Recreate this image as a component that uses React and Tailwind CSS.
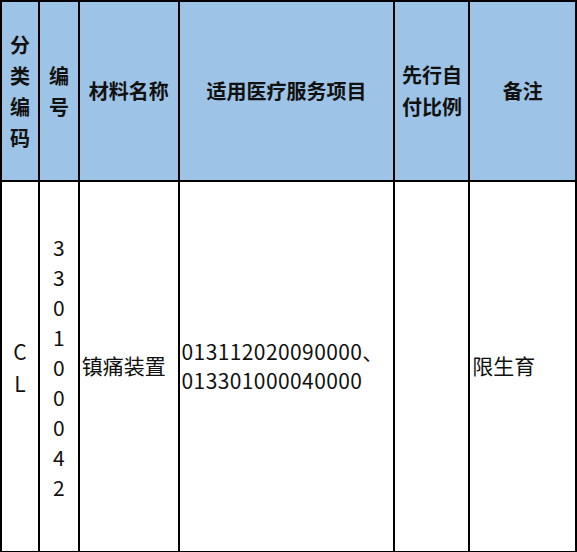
import React from "react";

const font = { fontFamily: '"Microsoft YaHei", "Noto Sans CJK SC", "Noto Sans", sans-serif' };

const Stack = ({ text, className = "" }) => (
  <div className={`flex flex-col items-center ${className}`}>
    {text.split("").map((ch, i) => (
      <span key={i}>{ch}</span>
    ))}
  </div>
);

const App = () => {
  return (
    <div className="w-[577px] h-[552px] bg-white" style={font}>
      <table className="table-fixed border-collapse text-[#111]">
        <colgroup>
          <col className="w-[38px]" />
          <col className="w-[40px]" />
          <col className="w-[100px]" />
          <col className="w-[216px]" />
          <col className="w-[75px]" />
          <col className="w-[107px]" />
        </colgroup>
        <thead>
          <tr className="h-[180px] bg-[#9dc3e6] text-[20px] font-bold">
            <th className="border-2 border-black p-0">
              <Stack text="分类编码" className="leading-[31px]" />
            </th>
            <th className="border-2 border-black p-0">
              <Stack text="编号" className="leading-[31px]" />
            </th>
            <th className="border-2 border-black p-0">材料名称</th>
            <th className="border-2 border-black p-0">适用医疗服务项目</th>
            <th className="border-2 border-black px-1 leading-[32px]">先行自付比例</th>
            <th className="border-2 border-black p-0">备注</th>
          </tr>
        </thead>
        <tbody>
          <tr className="h-[371px] text-[21px]">
            <td className="border-2 border-black p-0">
              <Stack text="CL" className="leading-[32px]" />
            </td>
            <td className="border-2 border-black p-0">
              <Stack text="330100042" className="leading-[30px]" />
            </td>
            <td className="border-2 border-black pl-[2px] pb-[2px]">镇痛装置</td>
            <td className="border-2 border-black pl-[2px] pb-[2px] leading-[29px] tracking-[0.4px]">
              013112020090000、
              <br />
              013301000040000
            </td>
            <td className="border-2 border-black"></td>
            <td className="border-2 border-black pl-[2px] pb-[2px]">限生育</td>
          </tr>
        </tbody>
      </table>
    </div>
  );
};

export default App;
